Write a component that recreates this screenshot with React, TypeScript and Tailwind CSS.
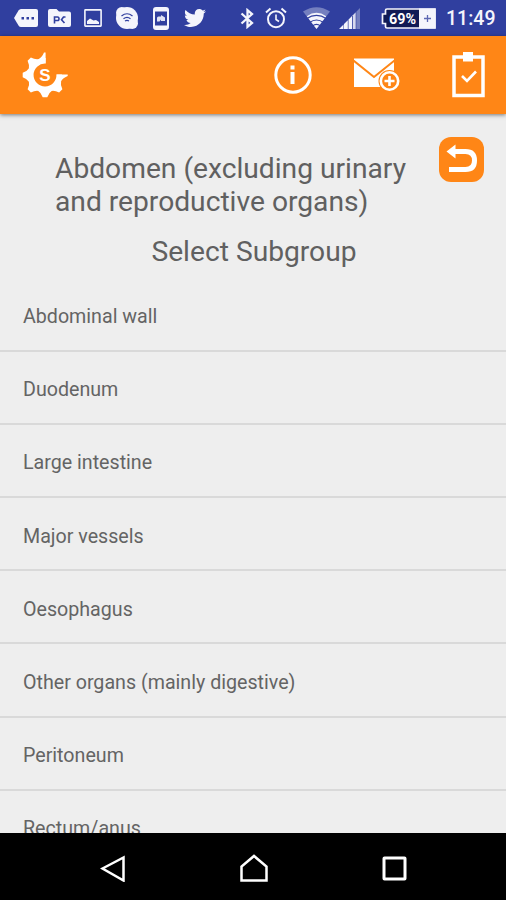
import React from 'react';
import { FaTwitter } from 'react-icons/fa';

const SUBGROUPS = [
  'Abdominal wall',
  'Duodenum',
  'Large intestine',
  'Major vessels',
  'Oesophagus',
  'Other organs (mainly digestive)',
  'Peritoneum',
  'Rectum/anus'
];

const TOOTH_ANGLES = [180, 225, 270, 315, 135];

const StatusBar: React.FC = () => (
  <div className="flex h-9 shrink-0 items-center bg-[#303f9f] pl-[14px] text-[#f4f5fc]">
    {/* Notifications */}
    <svg className="h-[18px] w-6" viewBox="0 0 24 18" fill="currentColor">
      <path d="M7 0H22Q24 0 24 2V16Q24 18 22 18H7Q5.500 18 4.500 16.500L0 9L4.500 1.500Q5.500 0 7 0Z" />
      <path d="M7.500 8h2.500v2.500H7.500zM12.500 8h2.500v2.500h-2.500zM17.500 8h2.500v2.500h-2.500z" fill="#303f9f" />
    </svg>
    <svg className="ml-[10px] h-[18px] w-[23px]" viewBox="0 0 23 18" fill="currentColor">
      <path d="M2 0H8.500L11 2.500H21Q23 2.500 23 4.500V16Q23 18 21 18H2Q0 18 0 16V2Q0 0 2 0Z" />
      <path d="M6.500 14.500V8H9.500Q11 8 11 9.800T9.500 11.500H6.500M17.500 8H15.500L13.500 10.800L16.500 14" fill="none" stroke="#303f9f" strokeWidth="1.600" />
    </svg>
    <svg className="ml-[13px] h-[18px] w-[18px]" viewBox="0 0 18 18">
      <rect x="0.900" y="0.900" width="16.200" height="16.200" rx="0.500" fill="none" stroke="currentColor" strokeWidth="1.600" />
      <path d="M3 15V12L6 9.500L9.500 11.500L12 11L15 13V15Z" fill="currentColor" />
    </svg>
    <svg className="ml-[13px] h-6 w-6" viewBox="0 0 24 24" fill="currentColor">
      <circle cx="12" cy="12" r="11" />
      <circle cx="6.800" cy="6.800" r="5.800" />
      <circle cx="17.200" cy="17.200" r="5.800" />
      <path d="M6.500 10Q12 5.500 17.500 10M8.500 12.800Q12 10 15.500 12.800M10 15Q12 13.800 14 15" fill="none" stroke="#303f9f" strokeWidth="1.200" />
    </svg>
    <svg className="ml-[14px] h-[23px] w-4" viewBox="0 0 16 23">
      <rect x="1" y="1" width="14" height="21" rx="2" fill="none" stroke="currentColor" strokeWidth="2" />
      <path d="M2 2H14V4.500H2zM2 18.500H14V21H2z" fill="currentColor" />
      <path d="M4 14.500V11Q4 9.500 5.500 9.500H8V8L12 10.500V14H8V12.500L6.500 14.500Z" fill="currentColor" opacity="0.900" />
    </svg>
    <FaTwitter className="ml-[15px] h-[22px] w-[22px]" />

    {/* System indicators */}
    <svg className="ml-[34px] h-[21px] w-[15px]" viewBox="0 0 15 21" fill="none" stroke="currentColor" strokeWidth="2.300">
      <path d="M1.500 5.500L12 15L7.500 18.800V2.200L12 6L1.500 15.500" />
    </svg>
    <svg className="ml-[10px] h-[22px] w-[22px]" viewBox="0 0 22 22" fill="none" stroke="currentColor" strokeWidth="2">
      <circle cx="11" cy="12.200" r="8" />
      <path d="M11 7.500V12.500L14 14.500" strokeWidth="1.600" />
      <path d="M1 5.500L5.500 1.500M21 5.500L16.500 1.500" />
    </svg>
    <svg className="ml-4 h-[22px] w-[27px]" viewBox="0 0 27 22" fill="currentColor">
      <path d="M13.500 22L0 4.500Q13.500 -4 27 4.500Z" opacity="0.350" />
      <path d="M13.500 22L3.800 9.200Q13.500 2.500 23.200 9.200Z" />
      <path d="M3.500 11.700Q13.500 5 23.500 11.700M6.500 15.500Q13.500 10.500 20.500 15.500M9.500 19Q13.500 15.700 17.500 19" fill="none" stroke="#303f9f" strokeWidth="1.200" />
    </svg>
    <svg className="ml-[9px] h-[21px] w-[22px]" viewBox="0 0 22 21" fill="currentColor">
      <path d="M0 21L4.500 16.500V21ZM5 21V16L8.800 12.200V21ZM9.500 21V11.500L13 8V21Z" />
      <path d="M13.800 21V7.200L16.700 4.300V21Z" opacity="0.850" />
      <path d="M17.300 21V3.700L21 0V21Z" opacity="0.350" />
    </svg>
    <svg className="ml-5 h-[21px] w-[55px]" viewBox="0 0 55 21">
      <path d="M6 1H54V20H6Q4.500 20 4.500 18.500V15.500H1.500V6H4.500V2.500Q4.500 1 6 1Z" fill="#101a55" stroke="currentColor" strokeWidth="1.700" />
      <rect x="38" y="0.500" width="16.500" height="20" fill="currentColor" />
      <path d="M43 10.500H50M46.500 7V14" stroke="#5d68b3" strokeWidth="1.300" />
      <text x="8" y="15.800" textLength="27" lengthAdjust="spacingAndGlyphs" fill="#fff" fontFamily="Roboto, sans-serif" fontWeight="700" fontSize="15">69%</text>
    </svg>
    <span className="ml-[10px] pt-[2px] text-[19.5px] leading-9 font-medium">11:49</span>
  </div>
);

const AppBar: React.FC = () => (
  <div className="z-10 flex h-[78px] shrink-0 items-center bg-[#ff8616] pl-[22px] text-white shadow-[0_1px_4px_rgba(0,0,0,0.5)]">
    <svg className="h-[46px] w-[46px]" viewBox="-23 -23 46 46" fill="currentColor">
      <path d="M0.600 -14.200A14.200 14.200 0 1 0 14.200 -0.500" fill="none" stroke="currentColor" strokeWidth="5.500" />
      {TOOTH_ANGLES.map((angle) => (
        <path key={angle} d="M-7.500 -15.300Q-4 -17.500 -2.300 -22.300H2.300Q4 -17.500 7.500 -15.300Z" transform={`rotate(${angle})`} />
      ))}
      <path d="M0.600 -11.500V-22.500H-1Q-3 -17.500 -7 -15.500Z" />
      <path d="M11.500 -0.500H22.700V1Q17.500 3 15.500 7Z" />
      <text y="6" textAnchor="middle" fontFamily="Liberation Sans, sans-serif" fontWeight="700" fontSize="17">S</text>
    </svg>

    <svg className="ml-[206px] h-[38px] w-[38px]" viewBox="0 0 38 38">
      <circle cx="19" cy="19" r="17.200" fill="none" stroke="currentColor" strokeWidth="3" />
      <path d="M16.500 9.500H20.500V13.500H16.500zM16.500 16H20.500V28H16.500z" fill="currentColor" />
    </svg>

    <svg className="ml-[42px] h-[34px] w-[46px]" viewBox="0 0 46 34">
      <path d="M0 0.500H40V29H0Z" fill="currentColor" />
      <path d="M-0.500 2.500L20 19L40.500 2.500" fill="none" stroke="#ff8616" strokeWidth="2" />
      <circle cx="35.500" cy="23" r="11" fill="#ff8616" />
      <circle cx="35.500" cy="23" r="8.700" fill="none" stroke="currentColor" strokeWidth="2.600" />
      <path d="M30.500 23H40.500M35.500 18V28" stroke="currentColor" strokeWidth="2.600" />
    </svg>

    <svg className="ml-[52px] h-[46px] w-[33px]" viewBox="0 0 33 46">
      <path d="M2 5H31V43.500H2Z" fill="none" stroke="currentColor" strokeWidth="3.500" />
      <path d="M11 0H21V9.500H11Z" fill="currentColor" />
      <path d="M10 24L15 29L24 19.500" fill="none" stroke="currentColor" strokeWidth="2.600" />
    </svg>
  </div>
);

const BackButton: React.FC = () => (
  <button className="mt-[23px] h-[45px] w-[45px] rounded-[12px] bg-[#ff8616]" aria-label="Back">
    <svg className="h-[45px] w-[45px]" viewBox="0 0 45 45">
      <path d="M14 14.500H26.500Q35.500 14.500 35.500 23.500T26.500 32.500H10" fill="none" stroke="#fff" strokeWidth="5" />
      <path d="M7.500 14.500L16.500 7.500V21.500Z" fill="#fff" />
    </svg>
  </button>
);

const NavBar: React.FC = () => (
  <div className="flex h-[67px] shrink-0 items-start bg-black pt-[21px] pl-[100px]">
    <svg className="h-7 w-[26px]" viewBox="0 0 26 28" fill="none" stroke="#fff" strokeWidth="2.500">
      <path d="M2.500 14.500L23.500 3.500V26.500Z" />
    </svg>
    <svg className="ml-[113px] h-[29px] w-[30px]" viewBox="0 0 30 29" fill="none" stroke="#fff" strokeWidth="2.500">
      <path d="M2.500 26.500V12.500L15 2L27.500 12.500V26.500Z" />
    </svg>
    <svg className="ml-[112px] h-7 w-7" viewBox="0 0 28 28" fill="none" stroke="#fff" strokeWidth="3">
      <rect x="3" y="4" width="21" height="21" rx="0.500" />
    </svg>
  </div>
);

export default function App() {
  return (
    <div className="flex h-[900px] w-[506px] flex-col overflow-hidden bg-[#eeeeee] font-['Roboto',sans-serif]">
      <StatusBar />
      <AppBar />

      <div className="flex min-h-0 flex-1 flex-col overflow-hidden text-[#606060]">
        <div className="flex shrink-0">
          <h1 className="mt-[38px] ml-[55px] w-[384px] text-[28.2px] leading-[33px]">
            Abdomen (excluding urinary<br />and reproductive organs)
          </h1>
          <BackButton />
        </div>
        <h2 className="mt-[17px] shrink-0 pl-[2px] text-center text-[28.2px] leading-[33px]">Select Subgroup</h2>

        <ul className="mt-[11px] shrink-0">
          {SUBGROUPS.map((name) => (
            <li
              key={name}
              className="flex h-[73.1px] items-center border-b-2 border-[#d9d9d9] pt-[5px] pl-[23px] text-[19.65px] text-[#646464]"
            >
              {name}
            </li>
          ))}
        </ul>
      </div>

      <NavBar />
    </div>
  );
}
